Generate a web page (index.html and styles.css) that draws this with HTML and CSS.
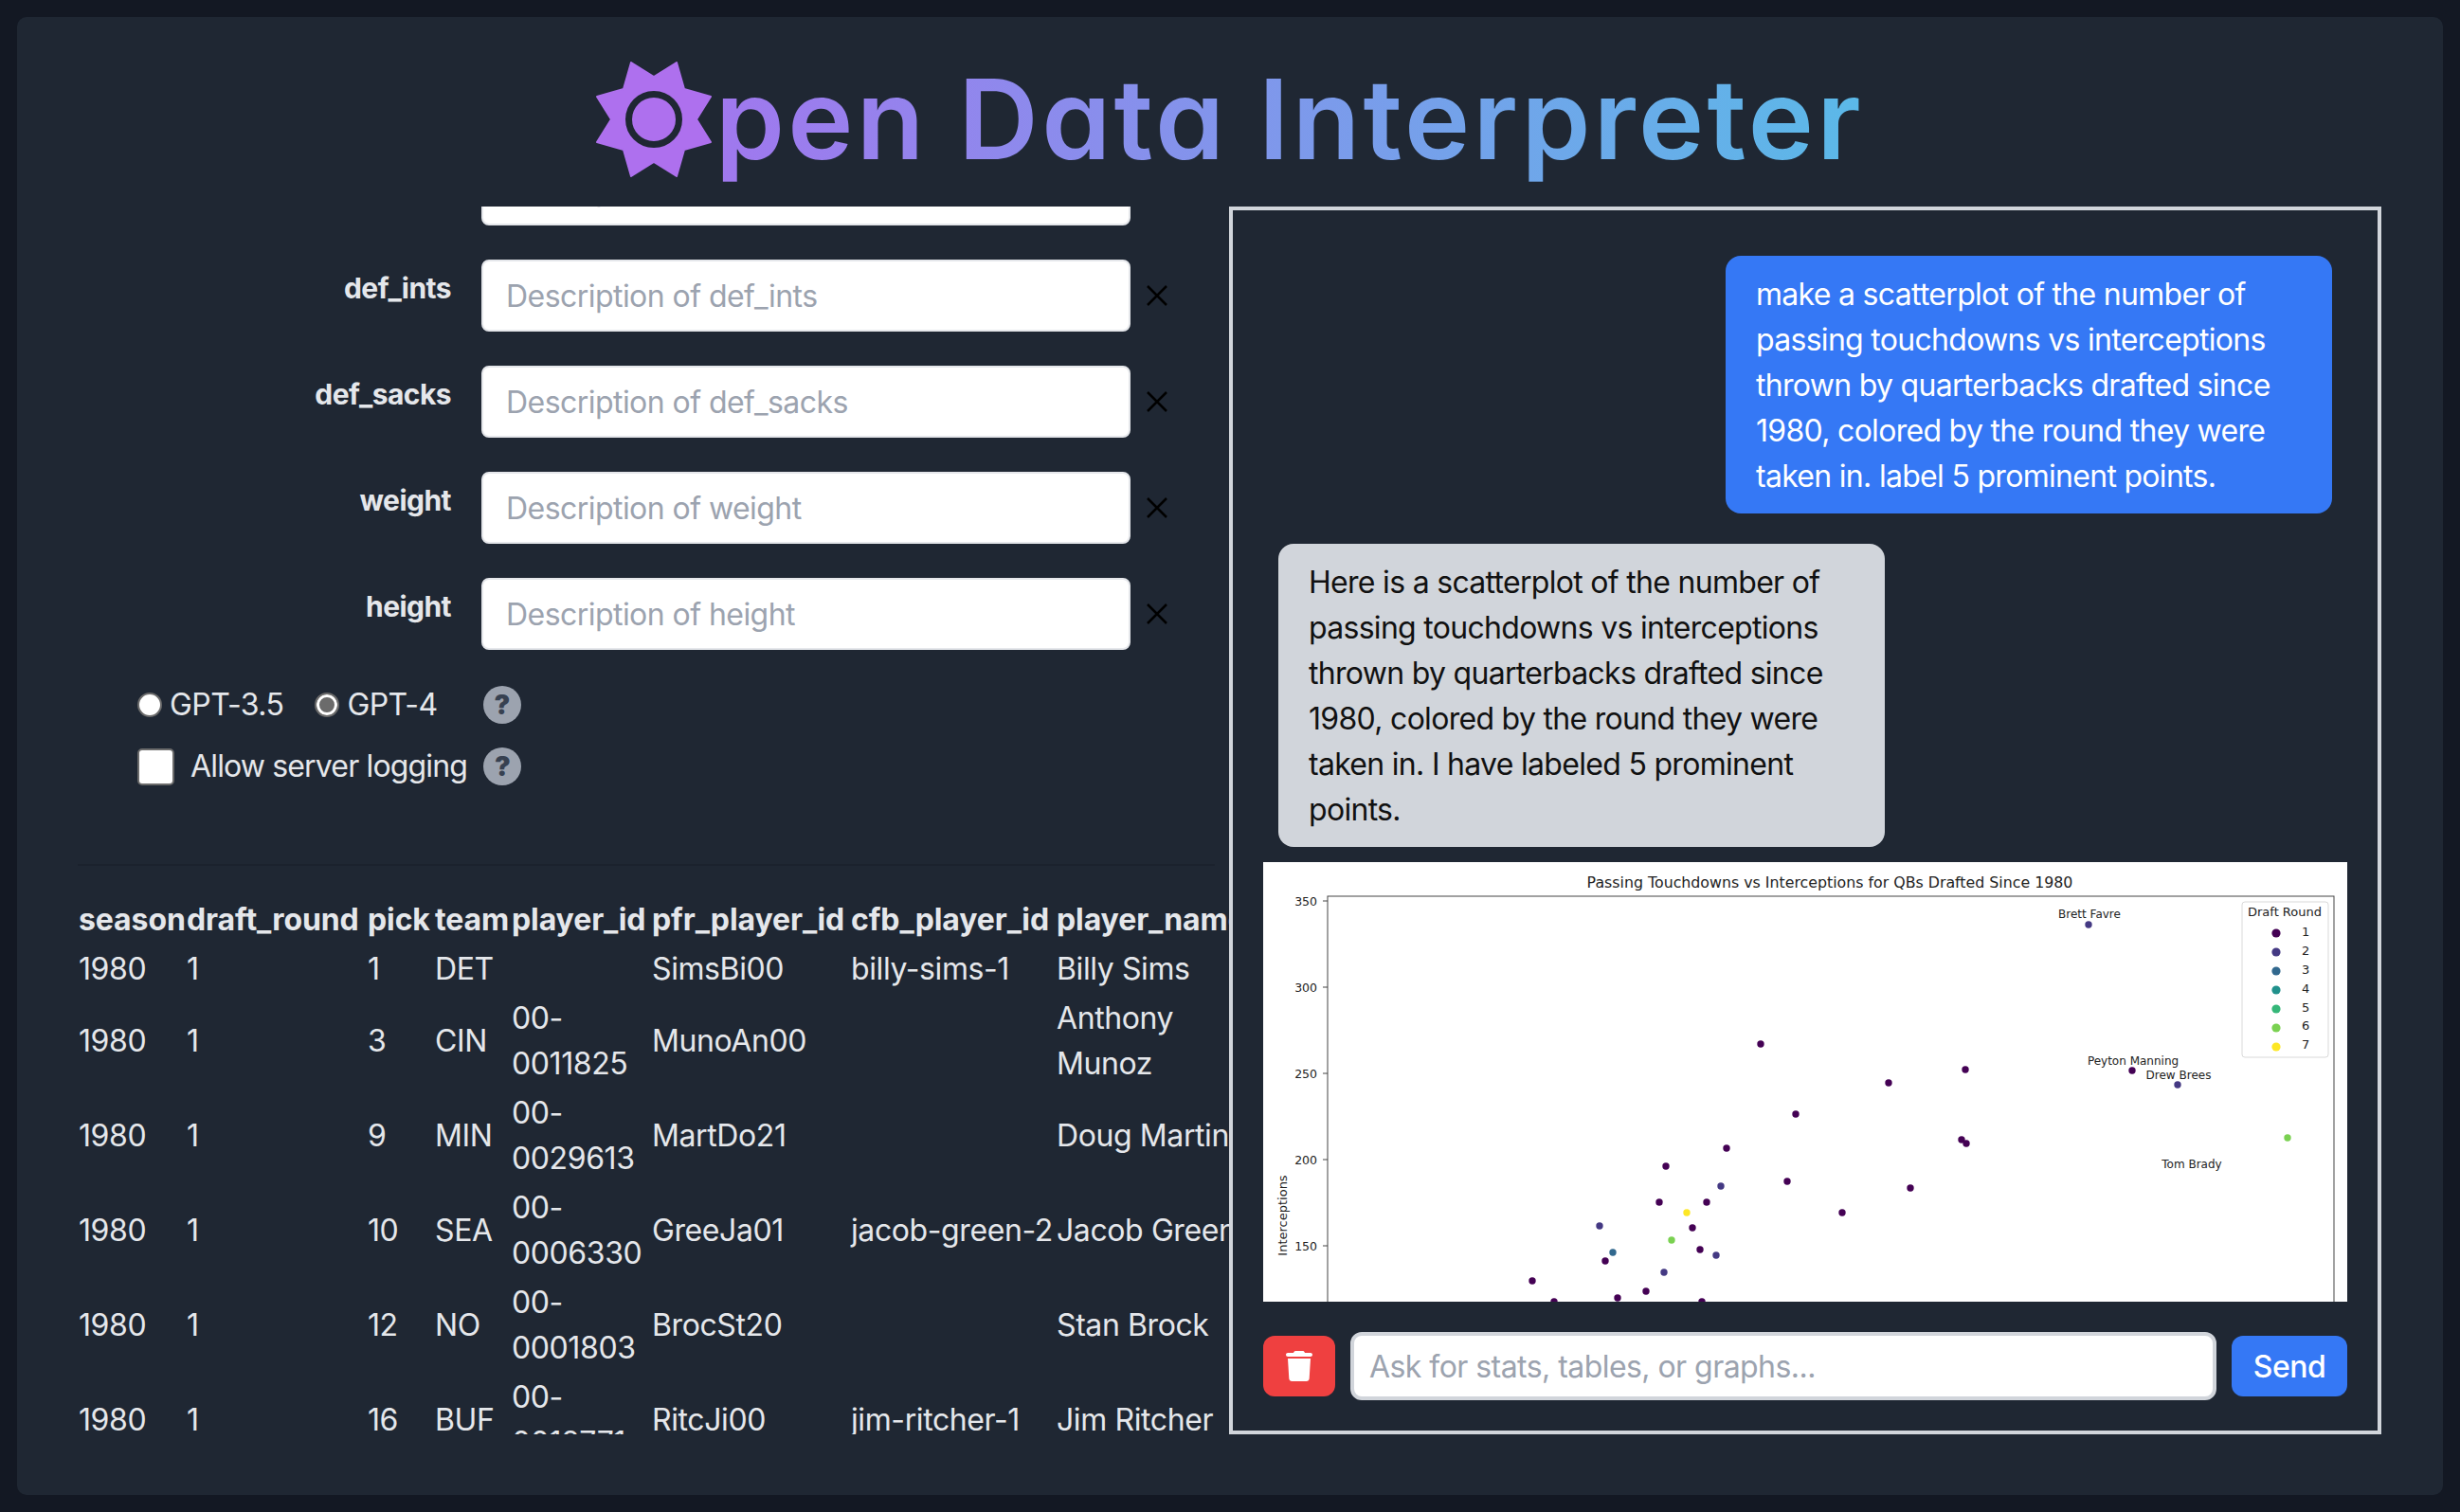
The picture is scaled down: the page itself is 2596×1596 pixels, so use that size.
FILE: index.html
```html
<!doctype html>
<html lang="en">
<head>
<meta charset="UTF-8">
<meta name="viewport" content="width=device-width, initial-scale=1">
<title>Open Data Interpreter</title>
<link rel="stylesheet" href="styles.css">
</head>

<body>
<main class="panel">
    <header class="pageHeader">
        <svg class="logoIcon" viewBox="-1 -1 122 122">
            <path class="logoStar" d="M36 0 60 15 84 0 92 28 120 36 105 60 120 84 92 92 84 120 60 105 36 120 28 92 0 84 15 60 0 36 28 28Z"></path>
            <circle class="logoRing" cx="60" cy="60" r="26.5"></circle>
        </svg>
        <h1 class="pageTitle">pen Data Interpreter</h1>
    </header>
    <div class="columns">
        <section class="leftColumn">
            <div class="fieldList">
                <div class="fieldRow">
                    <label class="fieldLabel">def_tds</label>
                    <input class="fieldInput" type="text" placeholder="Description of def_tds">
                    <svg class="fieldRemove" viewBox="0 0 24 24"><path d="M2 2 22 22M22 2 2 22"></path></svg>
                </div>
                <div class="fieldRow">
                    <label class="fieldLabel">def_ints</label>
                    <input class="fieldInput" type="text" placeholder="Description of def_ints">
                    <svg class="fieldRemove" viewBox="0 0 24 24"><path d="M2 2 22 22M22 2 2 22"></path></svg>
                </div>
                <div class="fieldRow">
                    <label class="fieldLabel">def_sacks</label>
                    <input class="fieldInput" type="text" placeholder="Description of def_sacks">
                    <svg class="fieldRemove" viewBox="0 0 24 24"><path d="M2 2 22 22M22 2 2 22"></path></svg>
                </div>
                <div class="fieldRow">
                    <label class="fieldLabel">weight</label>
                    <input class="fieldInput" type="text" placeholder="Description of weight">
                    <svg class="fieldRemove" viewBox="0 0 24 24"><path d="M2 2 22 22M22 2 2 22"></path></svg>
                </div>
                <div class="fieldRow">
                    <label class="fieldLabel">height</label>
                    <input class="fieldInput" type="text" placeholder="Description of height">
                    <svg class="fieldRemove" viewBox="0 0 24 24"><path d="M2 2 22 22M22 2 2 22"></path></svg>
                </div>
            </div>
            <div class="modelRow">
                <input class="radioInput" type="radio" name="model" id="radioGpt35">
                <label class="radioLabel" for="radioGpt35">GPT-3.5</label>
                <input class="radioInput" type="radio" name="model" id="radioGpt4" checked>
                <label class="radioLabel" for="radioGpt4">GPT-4</label>
                <span class="helpIcon helpIconModel">?</span>
            </div>
            <div class="loggingRow">
                <input class="checkInput" type="checkbox" id="checkLogging">
                <label class="checkLabel" for="checkLogging">Allow server logging</label>
                <span class="helpIcon">?</span>
            </div>
            <hr class="divider">
            <table class="dataTable">
                <colgroup>
                    <col class="colSeason">
                    <col class="colRound">
                    <col class="colPick">
                    <col class="colTeam">
                    <col class="colPlayerId">
                    <col class="colPfrId">
                    <col class="colCfbId">
                    <col class="colName">
                </colgroup>
                <thead>
                    <tr><th>season</th><th>draft_round</th><th>pick</th><th>team</th><th>player_id</th><th>pfr_player_id</th><th>cfb_player_id</th><th>player_name</th></tr>
                </thead>
                <tbody>
                    <tr><td>1980</td><td>1</td><td>1</td><td>DET</td><td></td><td>SimsBi00</td><td>billy-sims-1</td><td>Billy Sims</td></tr>
                    <tr><td>1980</td><td>1</td><td>3</td><td>CIN</td><td>00-0011825</td><td>MunoAn00</td><td></td><td>Anthony Munoz</td></tr>
                    <tr><td>1980</td><td>1</td><td>9</td><td>MIN</td><td>00-0029613</td><td>MartDo21</td><td></td><td>Doug Martin</td></tr>
                    <tr><td>1980</td><td>1</td><td>10</td><td>SEA</td><td>00-0006330</td><td>GreeJa01</td><td>jacob-green-2</td><td>Jacob Green</td></tr>
                    <tr><td>1980</td><td>1</td><td>12</td><td>NO</td><td>00-0001803</td><td>BrocSt20</td><td></td><td>Stan Brock</td></tr>
                    <tr><td>1980</td><td>1</td><td>16</td><td>BUF</td><td>00-0012771</td><td>RitcJi00</td><td>jim-ritcher-1</td><td>Jim Ritcher</td></tr>
                </tbody>
            </table>
        </section>
        <section class="chatBox">
            <div class="chatLog">
                <div class="bubble bubbleUser">make a scatterplot of the number of passing touchdowns vs interceptions thrown by quarterbacks drafted since 1980, colored by the round they were taken in. label 5 prominent points.</div>
                <div class="bubble bubbleBot">Here is a scatterplot of the number of passing touchdowns vs interceptions thrown by quarterbacks drafted since 1980, colored by the round they were taken in. I have labeled 5 prominent points.</div>
                <svg class="plot" viewBox="0 0 1144 464">
                    <rect class="plotFrame" x="68" y="36" width="1062" height="440"></rect>
                    <path class="plotTick" d="M63 41H68M63 132H68M63 223H68M63 314H68M63 405H68"></path>
                    <text class="plotTitle" x="598" y="27">Passing Touchdowns vs Interceptions for QBs Drafted Since 1980</text>
                    <text class="plotAxisLabel" transform="translate(25 373) rotate(-90)">Interceptions</text>
                    <text class="plotTickLabel" x="57" y="46">350</text>
                    <text class="plotTickLabel" x="57" y="137">300</text>
                    <text class="plotTickLabel" x="57" y="228">250</text>
                    <text class="plotTickLabel" x="57" y="319">200</text>
                    <text class="plotTickLabel" x="57" y="410">150</text>
                    <circle class="round1" cx="525" cy="192" r="3.7"></circle>
                    <circle class="round1" cx="660" cy="233" r="3.7"></circle>
                    <circle class="round1" cx="562" cy="266" r="3.7"></circle>
                    <circle class="round1" cx="489" cy="302" r="3.7"></circle>
                    <circle class="round1" cx="425" cy="321" r="3.7"></circle>
                    <circle class="round2" cx="483" cy="342" r="3.7"></circle>
                    <circle class="round1" cx="553" cy="337" r="3.7"></circle>
                    <circle class="round1" cx="418" cy="359" r="3.7"></circle>
                    <circle class="round1" cx="468" cy="359" r="3.7"></circle>
                    <circle class="round7" cx="447" cy="370" r="3.7"></circle>
                    <circle class="round1" cx="611" cy="370" r="3.7"></circle>
                    <circle class="round2" cx="355" cy="384" r="3.7"></circle>
                    <circle class="round1" cx="453" cy="386" r="3.7"></circle>
                    <circle class="round6" cx="431" cy="399" r="3.7"></circle>
                    <circle class="round3" cx="369" cy="412" r="3.7"></circle>
                    <circle class="round1" cx="461" cy="409" r="3.7"></circle>
                    <circle class="round1" cx="361" cy="421" r="3.7"></circle>
                    <circle class="round2" cx="478" cy="415" r="3.7"></circle>
                    <circle class="round2" cx="423" cy="433" r="3.7"></circle>
                    <circle class="round1" cx="284" cy="442" r="3.7"></circle>
                    <circle class="round1" cx="404" cy="453" r="3.7"></circle>
                    <circle class="round1" cx="374" cy="460" r="3.7"></circle>
                    <circle class="round1" cx="307" cy="464" r="3.7"></circle>
                    <circle class="round1" cx="463" cy="464" r="3.7"></circle>
                    <circle class="round1" cx="741" cy="219" r="3.7"></circle>
                    <circle class="round1" cx="737" cy="293" r="3.7"></circle>
                    <circle class="round1" cx="742" cy="297" r="3.7"></circle>
                    <circle class="round1" cx="683" cy="344" r="3.7"></circle>
                    <circle class="round2" cx="871" cy="66" r="3.7"></circle>
                    <circle class="round1" cx="917" cy="220" r="3.7"></circle>
                    <circle class="round2" cx="965" cy="235" r="3.7"></circle>
                    <circle class="round6" cx="1081" cy="291" r="3.7"></circle>
                    <text class="plotNote" x="872" y="59">Brett Favre</text>
                    <text class="plotNote" x="918" y="214">Peyton Manning</text>
                    <text class="plotNote" x="966" y="229">Drew Brees</text>
                    <text class="plotNote" x="980" y="323">Tom Brady</text>
                    <rect class="plotLegend" x="1033" y="42" width="91" height="164" rx="3"></rect>
                    <text class="plotLegendTitle" x="1078" y="57">Draft Round</text>
                    <circle class="round1" cx="1069" cy="75" r="4.6"></circle>
                    <circle class="round2" cx="1069" cy="95" r="4.6"></circle>
                    <circle class="round3" cx="1069" cy="115" r="4.6"></circle>
                    <circle class="round4" cx="1069" cy="135" r="4.6"></circle>
                    <circle class="round5" cx="1069" cy="155" r="4.6"></circle>
                    <circle class="round6" cx="1069" cy="175" r="4.6"></circle>
                    <circle class="round7" cx="1069" cy="195" r="4.6"></circle>
                    <text class="plotLegendItem" x="1096" y="78">1</text>
                    <text class="plotLegendItem" x="1096" y="98">2</text>
                    <text class="plotLegendItem" x="1096" y="118">3</text>
                    <text class="plotLegendItem" x="1096" y="138">4</text>
                    <text class="plotLegendItem" x="1096" y="158">5</text>
                    <text class="plotLegendItem" x="1096" y="177">6</text>
                    <text class="plotLegendItem" x="1096" y="197">7</text>
                </svg>
            </div>
            <div class="chatInputRow">
                <button class="trashButton" type="button">
                    <svg class="trashIcon" viewBox="0 0 448 512"><path d="M135.2 17.7L128 32H32C14.3 32 0 46.3 0 64S14.3 96 32 96H416c17.7 0 32-14.3 32-32s-14.3-32-32-32H320l-7.2-14.3C307.4 6.8 296.3 0 284.2 0H163.8c-12.1 0-23.2 6.8-28.6 17.7zM416 128H32L53.2 467c1.6 25.3 22.6 45 47.9 45H346.9c25.3 0 46.3-19.7 47.9-45L416 128z"></path></svg>
                </button>
                <input class="chatInput" type="text" placeholder="Ask for stats, tables, or graphs...">
                <button class="sendButton" type="button">Send</button>
            </div>
        </section>
    </div>
</main>
</body>
</html>
```

FILE: styles.css
```css
*,
*:after,
*:before {
    box-sizing: border-box;
}
body {
    background: #131823;
    color: #e5e7eb;
    font-family: Inter, "Liberation Sans", sans-serif;
    font-size: 32px;
    letter-spacing: -0.55px;
    line-height: 48px;
    margin: 18px;
}
button,
input {
    font-family: inherit;
    font-size: inherit;
    letter-spacing: inherit;
}
input::placeholder {
    color: #9ca3af;
}
.panel {
    background: #1f2733;
    border-radius: 10px;
    height: 1560px;
    overflow: hidden;
    padding: 0 64px 64px;
}
.pageHeader {
    align-items: center;
    display: flex;
    height: 200px;
    justify-content: center;
    padding-top: 16px;
}
.logoIcon {
    flex: none;
    height: 122px;
    width: 122px;
}
.logoStar {
    fill: #ae70ee;
    stroke: #ae70ee;
    stroke-linejoin: round;
    stroke-width: 2px;
}
.logoRing {
    fill: #ae70ee;
    stroke: #1f2733;
    stroke-width: 7px;
}
.pageTitle {
    background: linear-gradient(to right, #a078ee, #5bb9e8);
    -webkit-background-clip: text;
    background-clip: text;
    color: transparent;
    font-family: Inter, sans-serif;
    font-feature-settings: "cv11";
    font-size: 117px;
    font-weight: 600;
    letter-spacing: 3.3px;
    line-height: 150px;
    margin: 0 0 0 4px;
}
.columns {
    display: grid;
    grid-template-columns: 1fr 1fr;
    height: 1296px;
}
.leftColumn {
    overflow: hidden;
}
.fieldList {
    display: flex;
    flex-direction: column;
    gap: 36px;
    margin-top: -56px;
}
.fieldRow {
    align-items: flex-start;
    display: flex;
}
.fieldLabel {
    font-size: 30px;
    font-weight: 700;
    margin-right: 32px;
    padding-top: 6px;
    text-align: right;
    width: 394px;
}
.fieldInput {
    background: #fff;
    border: 2px solid #e5e7eb;
    border-radius: 8px;
    height: 76px;
    padding: 0 24px;
    width: 685px;
}
.fieldRemove {
    fill: none;
    height: 24px;
    margin: 26px 0 0 16px;
    stroke: #000;
    stroke-width: 2.5px;
    width: 24px;
}
.modelRow,
.loggingRow {
    align-items: center;
    display: flex;
    height: 48px;
    padding-left: 63px;
}
.modelRow {
    margin-top: 34px;
}
.loggingRow {
    margin-top: 17px;
}
.radioInput {
    appearance: none;
    background: #fff;
    border: 2px solid #6b6b6b;
    border-radius: 50%;
    flex: none;
    height: 26px;
    margin: 0 8px 0 0;
    width: 26px;
}
.radioInput:checked {
    background: #6b6b6b;
    box-shadow: inset 0 0 0 3px #fff;
}
.radioLabel {
    margin-right: 33px;
}
.checkLabel {
    letter-spacing: -0.85px;
}
.helpIcon {
    align-items: center;
    background: #9ca3af;
    border-radius: 50%;
    color: #374151;
    display: flex;
    flex: none;
    font-size: 28px;
    font-weight: 900;
    height: 40px;
    justify-content: center;
    margin-left: 17px;
    width: 40px;
}
.helpIconModel {
    margin-left: 15px;
}
.checkInput {
    appearance: none;
    background: #fff;
    border: 2px solid #6b6b6b;
    border-radius: 5px;
    flex: none;
    height: 39px;
    margin: 0 17px 0 0;
    width: 39px;
}
.divider {
    border: 0;
    border-top: 2px solid #1b222d;
    margin: 79px 16px 30px 0;
}
.dataTable {
    letter-spacing: -0.4px;
    margin-left: -2px;
    table-layout: fixed;
    width: 1256px;
}
.dataTable th {
    font-weight: 700;
    letter-spacing: -0.1px;
    text-align: left;
}
.colSeason {
    width: 112px;
}
.colRound {
    width: 189px;
}
.colPick {
    width: 69px;
}
.colTeam {
    width: 79px;
}
.colPlayerId {
    width: 146px;
}
.colPfrId {
    width: 208px;
}
.colCfbId {
    width: 215px;
}
.colName {
    width: 220px;
}
.chatBox {
    border: 4px solid #d1d5db;
    display: flex;
    flex-direction: column;
    height: 1296px;
    margin: 0 1px 0 -1px;
    overflow: hidden;
}
.chatLog {
    display: flex;
    flex: 1;
    flex-direction: column;
    gap: 32px;
    min-height: 0;
    overflow: hidden;
    padding: 48px 32px 0;
}
.bubble {
    border-radius: 16px;
    flex: none;
    letter-spacing: -0.7px;
    margin: 0 16px;
    padding: 17px 32px 15px;
    width: 640px;
}
.bubbleUser {
    align-self: flex-end;
    background: #3578f5;
    color: #fff;
}
.bubbleBot {
    background: #d1d5db;
    color: #111;
}
.plot {
    background: #fff;
    flex: none;
    height: 464px;
    margin-top: -16px;
    width: 1144px;
}
.plotFrame {
    fill: none;
    stroke: #444;
    stroke-width: 1px;
}
.plotTick {
    stroke: #444;
    stroke-width: 1px;
}
.plotTitle,
.plotAxisLabel,
.plotTickLabel,
.plotNote,
.plotLegendTitle,
.plotLegendItem {
    fill: #222;
    font-family: "DejaVu Sans", sans-serif;
    letter-spacing: 0;
}
.plotTitle {
    font-size: 15.8px;
    text-anchor: middle;
}
.plotAxisLabel {
    font-size: 13px;
    text-anchor: middle;
}
.plotTickLabel {
    font-size: 12.5px;
    text-anchor: end;
}
.plotNote {
    font-size: 12px;
    text-anchor: middle;
}
.plotLegend {
    fill: #fff;
    stroke: #d9d9d9;
    stroke-width: 1px;
}
.plotLegendTitle {
    font-size: 13px;
    text-anchor: middle;
}
.plotLegendItem {
    font-size: 13px;
}
.round1 {
    fill: #440154;
}
.round2 {
    fill: #443983;
}
.round3 {
    fill: #31688e;
}
.round4 {
    fill: #21918c;
}
.round5 {
    fill: #35b779;
}
.round6 {
    fill: #7ad151;
}
.round7 {
    fill: #fde725;
}
.chatInputRow {
    align-items: center;
    display: flex;
    flex: none;
    gap: 16px;
    height: 72px;
    margin: 32px 32px;
}
.trashButton,
.sendButton {
    border: 0;
    border-radius: 12px;
    color: #fff;
    flex: none;
    height: 64px;
}
.trashButton {
    background: #ef4040;
    padding: 0;
    width: 76px;
}
.trashIcon {
    display: block;
    fill: #fff;
    height: 32px;
    margin: auto;
    width: 28px;
}
.chatInput {
    background: #fff;
    border: 4px solid #d1d5db;
    border-radius: 12px;
    flex: 1;
    height: 72px;
    min-width: 0;
    padding: 0 16px;
}
.sendButton {
    background: #3578f5;
    font-weight: 500;
    padding: 0;
    width: 122px;
}
```
